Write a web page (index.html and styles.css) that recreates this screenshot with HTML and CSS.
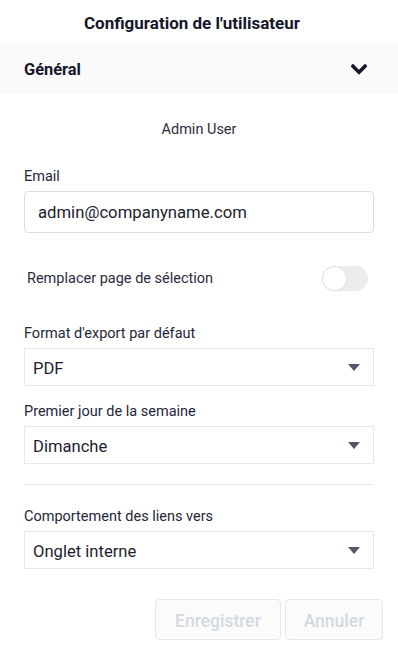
FILE: index.html
```html
<!DOCTYPE html>
<html lang="fr">
<head>
<meta charset="utf-8">
<link rel="stylesheet" href="styles.css">
</head>
<body>
<div class="panel">
  <h1 class="title">Configuration de l'utilisateur</h1>
  <div class="section-head">
    <span class="section-name">Général</span>
    <svg class="chevron" width="16" height="11" viewBox="0 0 16 11"><path d="M2 2.2 L8 8.2 L14 2.2" fill="none" stroke="#16172b" stroke-width="3.6" stroke-linecap="square"/></svg>
  </div>
  <div class="body">
    <div class="user">Admin User</div>
    <label class="label label-email">Email</label>
    <div class="input">admin@companyname.com</div>
    <div class="toggle-row">
      <span class="toggle-label">Remplacer page de sélection</span>
      <span class="toggle"><span class="knob"></span></span>
    </div>
    <label class="label label-first">Format d'export par défaut</label>
    <div class="select"><span>PDF</span><span class="caret"></span></div>
    <label class="label">Premier jour de la semaine</label>
    <div class="select"><span>Dimanche</span><span class="caret"></span></div>
    <hr class="divider">
    <label class="label label-after-divider">Comportement des liens vers</label>
    <div class="select"><span>Onglet interne</span><span class="caret"></span></div>
  </div>
  <div class="actions">
    <button class="btn btn-save">Enregistrer</button>
    <button class="btn btn-cancel">Annuler</button>
  </div>
</div>
</body>
</html>
```
FILE: styles.css
```css
* { box-sizing: border-box; }
html, body { margin: 0; padding: 0; background: #ffffff; }
body { font-family: Roboto, "Liberation Sans", sans-serif; color: #1c1d2e; width: 398px; height: 661px; overflow: hidden; }
.panel { display: flex; flex-direction: column; }
.title { margin: 0; height: 44px; display: flex; align-items: center; justify-content: center; font-size: 17px; font-weight: 700; color: #16172b; padding: 2px 14px 0 0; }
.section-head { height: 50px; background: #fafafa; display: flex; align-items: center; justify-content: space-between; padding: 0 31px 0 24px; }
.section-name { font-size: 16.4px; font-weight: 700; color: #16172b; }
.chevron { display: block; margin-top: 1px; }
.body { display: flex; flex-direction: column; padding: 0 24px; }
.user { text-align: center; font-size: 14.5px; line-height: 20px; color: #2d2e3d; margin-top: 26px; }
.label { font-size: 14.5px; line-height: 20px; color: #25263a; margin-top: 15px; padding-top: 1px; }
.label-email { margin-top: 26px; }
.label-first { margin-top: 32px; }
.label-after-divider { margin-top: 21px; }
.input { margin-top: 4px; height: 42px; border: 1px solid #dcdde6; border-radius: 4px; padding: 0 13px; display: flex; align-items: center; font-size: 16.7px; color: #1c1d2e; }
.toggle-row { margin-top: 33px; display: flex; align-items: center; justify-content: space-between; height: 25px; padding: 0 6px 0 3px; }
.toggle-label { font-size: 14.5px; color: #2a2b3d; }
.toggle { width: 46px; height: 25px; border-radius: 13px; background: #ececec; position: relative; display: block; }
.knob { position: absolute; left: 1px; top: 1px; width: 23px; height: 23px; border-radius: 50%; background: #ffffff; box-shadow: 0 0 0 1px #e2e2e2, 0 1px 2px rgba(0,0,0,0.08); }
.select { margin-top: 4px; height: 38px; border: 1px solid #e8e8ec; display: flex; align-items: center; justify-content: space-between; padding: 2px 13px 0 8px; font-size: 16.6px; color: #1c1d2e; }
.caret { width: 0; height: 0; border-left: 6.5px solid transparent; border-right: 6.5px solid transparent; border-top: 7px solid #545566; margin-top: -1px; }
.divider { margin: 20px 0 0; border: 0; border-top: 1px solid #e8e8ec; height: 0; }
.actions { display: flex; justify-content: flex-end; gap: 4px; padding: 0 15px 0 0; margin-top: 30px; }
.btn { height: 41px; border: 1px solid #e4e7eb; border-radius: 4px; background: #fbfbfc; color: #d3d9e1; font-family: Roboto, "Liberation Sans", sans-serif; font-size: 17.5px; font-weight: 500; padding: 2px 0 0; }
.btn-save { width: 126px; }
.btn-cancel { width: 98px; }
```
